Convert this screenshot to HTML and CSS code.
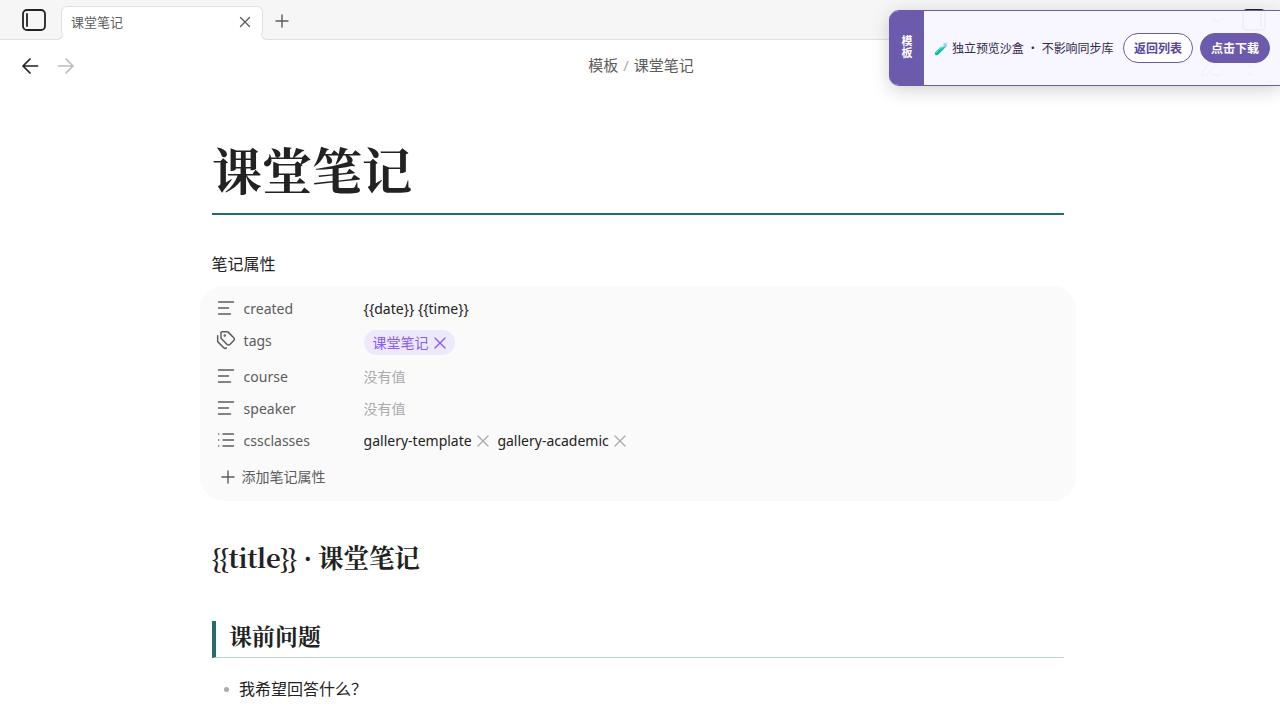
FILE: index.html
```html
<!DOCTYPE html>
<html lang="zh-CN">
<head>
    <meta charset="UTF-8">
    <meta name="viewport" content="width=device-width, initial-scale=1.0">
    <title>课堂笔记</title>
    <link rel="stylesheet" href="styles.css">
</head>
<body>
    <div class="tab-bar">
        <svg class="sidebar-toggle" viewBox="0 0 26 24"><rect x="1" y="2" width="22" height="20" rx="4"/><path d="M5 6v12"/></svg>
        <div class="tab">
            <span class="tab-title">课堂笔记</span>
            <svg class="icon tab-close" viewBox="0 0 12 12"><path d="M1.500 1.500l9 9M10.500 1.500l-9 9"/></svg>
        </div>
        <svg class="icon new-tab" viewBox="0 0 14 14"><path d="M7 1v12M1 7h12"/></svg>
        <svg class="tab-list" viewBox="0 0 12 8"><path d="M1 1l5 5 5-5"/></svg>
        <svg class="sidebar-toggle right" viewBox="0 0 26 24"><rect x="1" y="2" width="22" height="20" rx="4"/><path d="M19 6v12"/></svg>
    </div>

    <div class="view-header">
        <svg class="nav-arrow" viewBox="0 0 18 18"><path d="M16.500 9H2M9 2L2 9l7 7"/></svg>
        <svg class="nav-arrow disabled" viewBox="0 0 18 18"><path d="M1.500 9H16M9 2l7 7-7 7"/></svg>
        <div class="breadcrumb">
            <span>模板</span><span class="slash">/</span><span>课堂笔记</span>
        </div>
        <svg class="view-action" viewBox="0 0 24 24"><path d="M13 21h9M2.500 22l1.300-5.500L17.500 2.800a2.800 2.800 0 0 1 4 4L7.800 20.500z"/></svg>
        <svg class="view-action" viewBox="0 0 24 24"><circle cx="12" cy="4" r="1"/><circle cx="12" cy="12" r="1"/><circle cx="12" cy="20" r="1"/></svg>
    </div>

    <main class="note">
        <h1 class="note-title">课堂笔记</h1>

        <div class="properties-heading">笔记属性</div>
        <div class="properties">
            <div class="property">
                <svg class="icon property-icon" viewBox="0 0 18 16"><path d="M1.500 2h15M1.500 8h10M1.500 14h12"/></svg>
                <span class="property-key">created</span>
                <span class="property-value">{{date}} {{time}}</span>
            </div>
            <div class="property tags">
                <svg class="icon tag-icon" viewBox="0 0 24 24"><path d="M13.172 2a2 2 0 0 1 1.414.586l6.710 6.710a2.400 2.400 0 0 1 0 3.408l-4.592 4.592a2.400 2.400 0 0 1-3.408 0l-6.710-6.710A2 2 0 0 1 6 9.172V3a1 1 0 0 1 1-1zM2 7v6.172a2 2 0 0 0 .586 1.414l6.710 6.710a2.400 2.400 0 0 0 3.191.193"/><circle cx="10.500" cy="6.500" r=".6"/></svg>
                <span class="property-key">tags</span>
                <span class="tag">课堂笔记<svg class="icon" viewBox="0 0 12 12"><path d="M1 1l10 10M11 1L1 11"/></svg></span>
            </div>
            <div class="property">
                <svg class="icon property-icon" viewBox="0 0 18 16"><path d="M1.500 2h15M1.500 8h10M1.500 14h12"/></svg>
                <span class="property-key">course</span>
                <span class="property-value empty">没有值</span>
            </div>
            <div class="property">
                <svg class="icon property-icon" viewBox="0 0 18 16"><path d="M1.500 2h15M1.500 8h10M1.500 14h12"/></svg>
                <span class="property-key">speaker</span>
                <span class="property-value empty">没有值</span>
            </div>
            <div class="property">
                <svg class="icon property-icon" viewBox="0 0 18 16"><path d="M6 2h10.500M6 8h10.500M6 14h10.500M1.600 2h.1M1.600 8h.1M1.600 14h.1"/></svg>
                <span class="property-key">cssclasses</span>
                <span class="property-value">
                    <span class="item">gallery-template<svg class="icon" viewBox="0 0 12 12"><path d="M1 1l10 10M11 1L1 11"/></svg></span>
                    <span class="item">gallery-academic<svg class="icon" viewBox="0 0 12 12"><path d="M1 1l10 10M11 1L1 11"/></svg></span>
                </span>
            </div>
            <div class="add-property">
                <svg class="icon" viewBox="0 0 14 14"><path d="M7 1v12M1 7h12"/></svg>
                <span>添加笔记属性</span>
            </div>
        </div>

        <h2 class="heading">{{title}} · 课堂笔记</h2>
        <h3 class="section-heading">课前问题</h3>
        <ul class="list">
            <li>我希望回答什么？</li>
        </ul>
    </main>

    <div class="sandbox-bar">
        <div class="sandbox-label">模板</div>
        <div class="sandbox-body">
            <span class="sandbox-text">🧪 独立预览沙盒 ・ 不影响同步库</span>
            <button class="button">返回列表</button>
            <button class="button primary">点击下载</button>
        </div>
    </div>
</body>
</html>
```
FILE: styles.css
```css
* {
    box-sizing: border-box;
}

body {
    margin: 0;
    height: 720px;
    overflow: hidden;
    background-color: #fff;
    color: #222;
    font-family: "Noto Sans", "Noto Sans CJK SC", sans-serif;
    font-size: 16px;
}

svg {
    display: block;
    flex: none;
    fill: none;
    stroke: #5c5c5c;
    stroke-width: 1.4;
    stroke-linecap: round;
    stroke-linejoin: round;
}

.tab-bar {
    display: flex;
    align-items: flex-start;
    height: 40px;
    padding: 6px 12px 0 22px;
    background-color: #f6f6f6;
    border-bottom: 1px solid #e0e0e0;
}

.sidebar-toggle {
    width: 26px;
    height: 24px;
    margin-top: 2px;
    stroke: #222;
    stroke-width: 1.8;
}

.tab {
    position: relative;
    display: flex;
    align-items: center;
    justify-content: space-between;
    width: 202px;
    height: 34px;
    margin-left: 13px;
    padding: 0 11px 3px 9px;
    background-color: #fff;
    border: 1px solid #e0e0e0;
    border-bottom: none;
    border-radius: 6px 6px 0 0;
}

/* curved feet joining the tab to the bar's bottom border */
.tab::before,
.tab::after {
    content: '';
    position: absolute;
    bottom: 0;
    width: 6px;
    height: 6px;
    border: 1px solid #e0e0e0;
    border-top: none;
    background-color: #f6f6f6;
    box-shadow: 0 0 0 4px #fff;
    clip-path: inset(0);
}

.tab::before {
    left: -6px;
    border-left: none;
    border-radius: 0 0 6px 0;
}

.tab::after {
    right: -6px;
    border-right: none;
    border-radius: 0 0 0 6px;
}

.tab-title {
    font-size: 13px;
    line-height: 18px;
    color: #5c5c5c;
}

.tab-close {
    width: 12px;
    height: 12px;
}

.new-tab {
    width: 14px;
    height: 14px;
    margin: 8px 0 0 12px;
}

.tab-list {
    width: 12px;
    height: 8px;
    margin: 11px 18px 0 auto;
}

.view-header {
    display: flex;
    align-items: center;
    height: 52px;
    padding: 0 18px 0 21px;
}

.nav-arrow {
    width: 18px;
    height: 18px;
    margin-right: 18px;
    stroke: #222;
    stroke-width: 1.7;
}

.nav-arrow.disabled {
    stroke: #bdbdbd;
}

.breadcrumb {
    flex: 1;
    display: flex;
    justify-content: center;
    font-size: 15px;
    line-height: 22px;
    color: #5c5c5c;
    padding: 0 0 2px 5px;
}

.breadcrumb .slash {
    margin: 0 5px;
    color: #ababab;
}

.view-action {
    width: 24px;
    height: 24px;
    margin-left: 15px;
}

.note {
    width: 852px;
    margin-left: 211.6px;
    padding-top: 40px;
}

.note-title,
.heading,
.section-heading {
    margin: 0;
    font-family: "Noto Serif CJK SC", "Liberation Serif", serif;
    font-weight: 700;
}

.note-title {
    height: 83px;
    padding-left: 0.5px;
    font-size: 50px;
    line-height: 72px;
    border-bottom: 2px solid #256d6d;
}

.properties-heading {
    margin-top: 37px;
    line-height: 24px;
}

.properties {
    height: 215px;
    margin: 10px -12px 0;
    padding: 7px 17px;
    background-color: #fafafa;
    border-radius: 24px;
    font-size: 14px;
}

.property {
    display: flex;
    align-items: flex-start;
    height: 32px;
    line-height: 32px;
    color: #5c5c5c;
}

.property.tags {
    height: 36px;
}

.property-icon {
    width: 18px;
    height: 16px;
    margin-top: 7px;
}

.tag-icon {
    width: 20px;
    height: 20px;
    margin: 5px -1px 0;
    stroke-width: 1.8;
}

.property-key {
    width: 120px;
    margin-left: 9px;
}

.property-value {
    display: flex;
    color: #222;
}

.property-value.empty {
    color: #ababab;
}

.tag {
    display: flex;
    align-items: center;
    gap: 5px;
    height: 25px;
    margin-top: 5px;
    padding: 0 9px;
    border-radius: 13px;
    background-color: #ede8fa;
    color: #8a5cf5;
    line-height: 25px;
}

.tag svg {
    width: 12px;
    height: 12px;
    stroke: #8a5cf5;
}

.item {
    display: flex;
    align-items: center;
    margin-right: 8.7px;
}

.item svg {
    width: 12px;
    height: 12px;
    margin-left: 5px;
    stroke: #ababab;
}

.add-property {
    display: flex;
    align-items: center;
    gap: 7px;
    margin: 8px 0 0 4px;
    line-height: 24px;
    color: #5c5c5c;
}

.add-property svg {
    width: 14px;
    height: 14px;
}

.heading {
    margin-top: 37px;
    font-size: 25.6px;
    line-height: 38px;
    letter-spacing: -0.18px;
}

.section-heading {
    height: 37px;
    margin-top: 45px;
    padding-left: 13.4px;
    font-size: 23px;
    line-height: 29px;
    border-left: 4px solid #256d6d;
    border-bottom: 1px solid #c0d5d5;
}

.list {
    margin: 19px 0 0;
    padding: 0;
    list-style: none;
}

.list li {
    display: flex;
    align-items: center;
    line-height: 24px;
}

.list li::before {
    content: '';
    width: 5px;
    height: 5px;
    margin: 0 10px 0 12.4px;
    border-radius: 50%;
    background-color: #ababab;
}

.sandbox-bar {
    position: absolute;
    top: 10px;
    right: 0;
    display: flex;
    width: 391px;
    height: 76px;
    border: 1px solid #6c5aad;
    border-width: 1px 0;
    border-radius: 10px 0 0 10px;
    background-color: rgba(248, 246, 255, 0.96);
    box-shadow: 0 4px 18px rgba(0, 0, 0, 0.18);
    overflow: hidden;
}

.sandbox-label {
    width: 35px;
    padding: 24px 11px 0 12.4px;
    background-color: #6c5aad;
    color: #fff;
    font-size: 11px;
    line-height: 12px;
    font-weight: 700;
}

.sandbox-body {
    flex: 1;
    display: flex;
    align-items: center;
    padding: 0 10px;
}

.sandbox-text {
    flex: 1;
    font-size: 12px;
    letter-spacing: -0.06px;
    white-space: nowrap;
    color: #2f2a4a;
}

.button {
    width: 70px;
    height: 30px;
    padding: 0;
    border: 1px solid #6c5aad;
    border-radius: 15px;
    background-color: #fff;
    color: #5a46a0;
    font-family: inherit;
    font-size: 12px;
    font-weight: 700;
}

.button.primary {
    margin-left: 7px;
    background-color: #6c5aad;
    color: #fff;
}
```
